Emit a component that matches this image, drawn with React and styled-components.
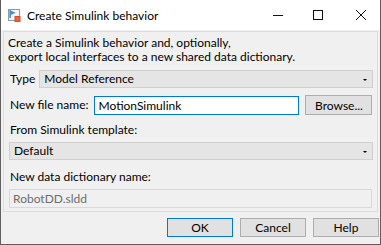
import React from 'react';
import styled, { createGlobalStyle } from 'styled-components';

const GlobalStyle = createGlobalStyle`
  html, body {
    margin: 0;
    padding: 0;
    background: #ffffff;
  }
  * {
    box-sizing: border-box;
  }
`;

const Window = styled.div`
  width: 381px;
  height: 245px;
  display: flex;
  flex-direction: column;
  border: 1px solid #5f5f5f;
  border-top: none;
  background: #f0f0f0;
  font-family: 'Segoe UI', Lato, 'Liberation Sans', sans-serif;
  font-size: 12px;
  color: #000;
  overflow: hidden;
`;

const TitleBar = styled.div`
  height: 30px;
  flex: none;
  display: flex;
  align-items: center;
  background: #ffffff;
  padding-left: 7px;
`;

const TitleText = styled.span`
  margin-left: 6px;
  font-size: 12px;
  flex: 1;
  padding-top: 1px;
`;

const CaptionGroup = styled.div`
  display: flex;
  height: 100%;
`;

const CaptionButton = styled.div`
  width: ${p => p.$w}px;
  height: 100%;
  display: flex;
  align-items: center;
  justify-content: center;
`;

const Body = styled.div`
  flex: 1;
  display: flex;
  flex-direction: column;
  padding: 1px 2px 0 2px;
`;

const Panel = styled.div`
  height: 181px;
  flex: none;
  border: 1px solid #dcdcdc;
  display: flex;
  flex-direction: column;
  padding: 4px 4px 0 5px;
`;

const Description = styled.div`
  line-height: 14px;
  padding-left: 0px;
  margin-left: -1px;
`;

const Row = styled.div`
  display: flex;
  align-items: center;
  margin-top: ${p => p.$mt || 0}px;
`;

const Label = styled.div`
  line-height: 14px;
  padding-left: 1px;
  margin-top: ${p => p.$mt || 0}px;
  margin-right: ${p => p.$mr || 0}px;
  flex: none;
`;

const Dropdown = styled.div`
  flex: 1;
  height: 18px;
  margin-top: ${p => p.$mt || 0}px;
  background: #e5e5e5;
  border: 1px solid #d0d0d0;
  display: flex;
  align-items: center;
  padding: 0 5px 0 4px;
  line-height: 14px;
`;

const DropText = styled.span`
  flex: 1;
`;

const Caret = styled.span`
  width: 0;
  height: 0;
  border-left: 2px solid transparent;
  border-right: 2px solid transparent;
  border-top: 2px solid #000;
  margin-top: 1px;
`;

const TextInput = styled.div`
  height: 19px;
  width: ${p => (p.$w ? `${p.$w}px` : 'auto')};
  flex: ${p => (p.$w ? 'none' : '1')};
  margin-top: ${p => p.$mt || 0}px;
  background: ${p => (p.$disabled ? '#f0f0f0' : '#ffffff')};
  border: 1px solid ${p => (p.$disabled ? '#d9d9d9' : '#0078d7')};
  color: ${p => (p.$disabled ? '#6d6d6d' : '#000')};
  display: flex;
  align-items: center;
  padding-left: 3px;
  margin-right: ${p => p.$mr || 0}px;
`;

const Button = styled.div`
  width: ${p => p.$w || 66}px;
  height: ${p => p.$h || 19}px;
  background: #e1e1e1;
  border: 1px solid ${p => (p.$default ? '#0078d7' : '#adadad')};
  display: flex;
  align-items: center;
  justify-content: center;
  flex: none;
`;

const Footer = styled.div`
  flex: 1;
  display: flex;
  justify-content: flex-end;
  align-items: flex-start;
  gap: 7px;
  padding-top: 6px;
  padding-right: 0px;
  margin-right: -1px;
`;

const AppIcon = () => (
  <svg width="13" height="13" viewBox="0 0 13 13">
    <rect x="0.5" y="0.5" width="11" height="11" fill="#f4f4f4" stroke="#8a9bb0" />
    <rect x="1.5" y="1" width="1.3" height="8" fill="#2b6fc2" />
    <path d="M2.8 1.5 L7.5 3.8 L2.8 6 Z" fill="#3b8ee0" />
    <rect x="6.5" y="7" width="6" height="6" fill="#d94a2a" />
    <rect x="7.5" y="8" width="4" height="4" fill="#e8643c" />
  </svg>
);

const MinIcon = () => (
  <svg width="10" height="10" viewBox="0 0 10 10">
    <line x1="0" y1="5.5" x2="10" y2="5.5" stroke="#111" strokeWidth="1" />
  </svg>
);

const MaxIcon = () => (
  <svg width="10" height="10" viewBox="0 0 10 10">
    <rect x="0.5" y="0.5" width="9" height="9" fill="none" stroke="#111" strokeWidth="1" />
  </svg>
);

const CloseIcon = () => (
  <svg width="10" height="10" viewBox="0 0 10 10">
    <path d="M0 0 L10 10 M10 0 L0 10" stroke="#111" strokeWidth="1" />
  </svg>
);

const App = () => {
  return (
    <>
      <GlobalStyle />
      <Window>
        <TitleBar>
          <AppIcon />
          <TitleText>Create Simulink behavior</TitleText>
          <CaptionGroup>
            <CaptionButton $w={32}><MinIcon /></CaptionButton>
            <CaptionButton $w={48}><MaxIcon /></CaptionButton>
            <CaptionButton $w={38}><CloseIcon /></CaptionButton>
          </CaptionGroup>
        </TitleBar>
        <Body>
          <Panel>
            <Description>
              Create a Simulink behavior and, optionally,
              <br />
              export local interfaces to a new shared data dictionary.
            </Description>
            <Row $mt={6}>
              <Label $mr={4}>Type</Label>
              <Dropdown>
                <DropText>Model Reference</DropText>
                <Caret />
              </Dropdown>
            </Row>
            <Row $mt={7}>
              <Label $mr={6}>New file name:</Label>
              <TextInput $w={205} $mr={6}>MotionSimulink</TextInput>
              <Button $w={67} $h={20}>Browse...</Button>
            </Row>
            <Label $mt={8}>From Simulink template:</Label>
            <Dropdown $mt={5} style={{ flex: 'none' }}>
              <DropText>Default</DropText>
              <Caret />
            </Dropdown>
            <Label $mt={10}>New data dictionary name:</Label>
            <TextInput $mt={5} $disabled style={{ flex: 'none', marginRight: 1 }}>RobotDD.sldd</TextInput>
          </Panel>
          <Footer>
            <Button $default>OK</Button>
            <Button>Cancel</Button>
            <Button>Help</Button>
          </Footer>
        </Body>
      </Window>
    </>
  );
};

export default App;
